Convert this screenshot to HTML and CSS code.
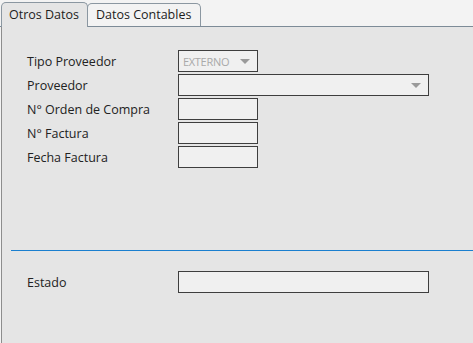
FILE: index.html
```html
<!DOCTYPE html>
<html lang="es">
  <head>
    <meta charset="UTF-8" />
    <title>Otros Datos</title>
    <link rel="stylesheet" href="styles.css">
  </head>
  <body>
    <div class="tabs">
      <div class="tab active">Otros Datos</div>
      <div class="tab">Datos Contables</div>
    </div>

    <div class="panel">
      <div class="form">
        <div class="row">
          <label>Tipo Proveedor</label>
          <div class="select small disabled">
            <span>EXTERNO</span>
            <span class="arrow"></span>
          </div>
        </div>
        <div class="row">
          <label>Proveedor</label>
          <div class="select wide">
            <span></span>
            <span class="arrow"></span>
          </div>
        </div>
        <div class="row">
          <label>N° Orden de Compra</label>
          <input type="text" class="inp small" />
        </div>
        <div class="row">
          <label>N° Factura</label>
          <input type="text" class="inp small" />
        </div>
        <div class="row">
          <label>Fecha Factura</label>
          <input type="text" class="inp small" />
        </div>
      </div>

      <div class="sep"></div>

      <div class="form bottom">
        <div class="row">
          <label>Estado</label>
          <input type="text" class="inp wide" />
        </div>
      </div>
    </div>
  </body>
</html>
```

FILE: styles.css
```css
html, body {
  height: 100%;
}
body {
  margin: 0;
  background-color: #f3f3f3;
  font-family: "Open Sans", "Noto Sans", sans-serif;
  font-size: 12px;
  color: #222;
  display: flex;
  flex-direction: column;
}

.tabs {
  display: flex;
  align-items: flex-end;
  height: 26px;
  padding-left: 1px;
  border-bottom: 1px solid #7d8b97;
}
.tab {
  height: 22px;
  line-height: 22px;
  padding: 0 9px 0 8px;
  background-color: #f3f3f3;
  border: 1px solid #8b97a1;
  border-bottom: none;
  border-radius: 5px 5px 0 0;
  font-size: 12.5px;
  color: #1d1d1d;
}
.tab.active {
  height: 24px;
  line-height: 24px;
  margin-bottom: -1px;
  background-color: #e5e5e5;
  padding: 0 8px 0 7px;
}
.tab + .tab {
  margin-left: -1px;
}

.panel {
  flex: 1;
  background-color: #e5e5e5;
  border-left: 1px solid #8d8d8d;
  margin-left: 1px;
}

.form {
  padding: 23px 0 0 25px;
  display: flex;
  flex-direction: column;
  gap: 2px;
}
.form.bottom {
  padding-top: 20px;
}
.row {
  display: flex;
  align-items: center;
}
.row label {
  width: 151px;
  font-size: 12.5px;
  color: #222;
}

.inp, .select {
  box-sizing: border-box;
  height: 22px;
  border: 1px solid #3e3e3e;
  background-color: #f0f0f0;
  margin: 0;
  padding: 0 4px;
}
.small {
  width: 80px;
}
.wide {
  width: 251px;
}
.select {
  display: flex;
  align-items: center;
  justify-content: space-between;
}
.select.disabled {
  color: #a9a9a9;
  font-size: 11px;
  letter-spacing: -0.3px;
}
.arrow {
  width: 0;
  height: 0;
  border-left: 5px solid transparent;
  border-right: 5px solid transparent;
  border-top: 5px solid #9a9a9a;
  margin-right: 3px;
}

.sep {
  margin: 82px 0 0 9px;
  height: 1px;
  background-color: #1b7fcf;
}
```
